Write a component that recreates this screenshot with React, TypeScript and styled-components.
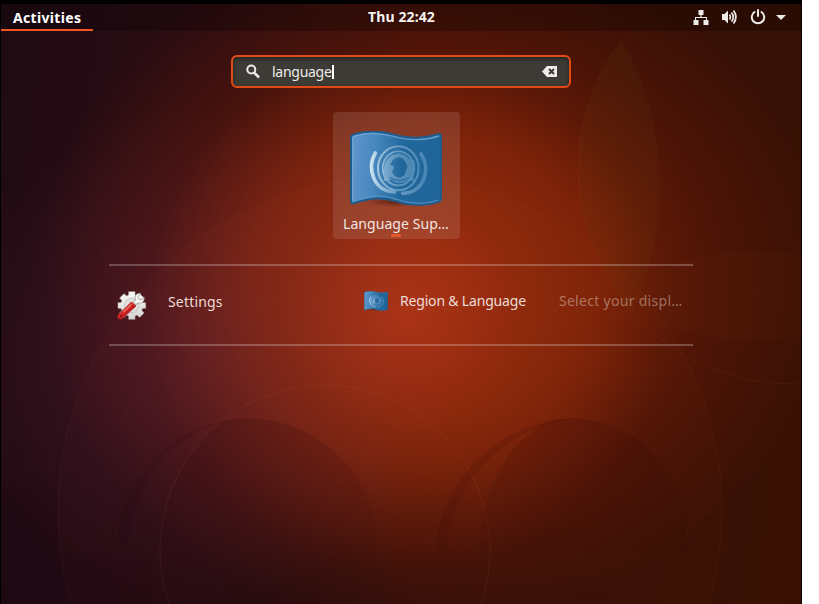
import React from "react";
import styled, { createGlobalStyle } from "styled-components";

const GlobalStyle = createGlobalStyle`
  html, body { margin: 0; padding: 0; background: #fff; }
  body { overflow: hidden; font-family: "Noto Sans", "Open Sans", sans-serif; }
  * { box-sizing: border-box; }
`;

const Screen = styled.div`
  width: 802px;
  height: 604px;
  padding: 4px 1px 0;
  background: #000;
`;

const Desktop = styled.main`
  position: relative;
  isolation: isolate;
  display: flex;
  flex-direction: column;
  align-items: center;
  height: 600px;
  overflow: hidden;
  background:
    radial-gradient(circle 260px at 405px 310px, rgba(192, 60, 28, 0.68), rgba(172, 54, 20, 0.38) 45%, rgba(150, 45, 14, 0)),
    radial-gradient(ellipse 260px 250px at 205px 350px, rgba(92, 34, 64, 0.46), rgba(92, 34, 64, 0)),
    radial-gradient(ellipse 395px 350px at 430px 275px, rgba(146, 42, 12, 0.85), rgba(138, 36, 8, 0.74) 40%, rgba(112, 28, 8, 0.4) 70%, rgba(80, 18, 6, 0)),
    radial-gradient(ellipse 480px 260px at 150px 640px, rgba(22, 8, 18, 0.5), rgba(22, 8, 18, 0)),
    linear-gradient(97deg, #200b14 0%, #2a0c12 22%, #320e09 50%, #371105 100%);
`;

const Wallpaper = styled.svg`
  position: absolute;
  inset: 0;
  z-index: -1;
`;

const TopBar = styled.header`
  display: grid;
  grid-template-columns: 1fr auto 1fr;
  align-items: stretch;
  width: 100%;
  height: 27px;
  background: rgba(0, 0, 0, 0.25);
  color: #f5f2f0;
  font-size: 14px;
  font-weight: 700;
  line-height: 20px;
`;

const Activities = styled.div`
  width: 92px;
  height: 27px;
  padding: 4px 0 0 12px;
  border-bottom: 2px solid #ef5526;
  color: #fff;
  letter-spacing: 0.33px;
  white-space: nowrap;
`;

const Clock = styled.time`
  padding: 3px 0 0 1px;
  letter-spacing: 0.1px;
  white-space: nowrap;
`;

const StatusArea = styled.div`
  display: flex;
  justify-content: flex-end;
  align-items: flex-start;
  padding: 5px 15px 0 0;
`;

const SearchEntry = styled.div`
  display: flex;
  align-items: center;
  width: 340px;
  height: 33px;
  margin-top: 24px;
  padding: 0 12px 0 13px;
  border: 2px solid #e24a15;
  border-radius: 6px;
  background: #3d3b36;
  box-shadow: inset 0 2px 4px rgba(0, 0, 0, 0.4);
  color: #eeebe8;
`;

const Query = styled.span`
  margin-left: 12px;
  font-size: 14px;
  line-height: 18px;
  letter-spacing: -0.27px;
  white-space: nowrap;
`;

const Caret = styled.span`
  height: 14px;
  flex: 1;
  border-left: 2px solid #fff;
`;

const AppTile = styled.div`
  display: flex;
  flex-direction: column;
  align-items: center;
  width: 127px;
  height: 127px;
  margin: 24px 9px 0 0;
  padding: 19px 2px 0 0;
  border-radius: 4px;
  background: rgba(255, 255, 255, 0.11);
`;

const TileLabel = styled.span`
  margin: 7px 0 0 1px;
  color: #f0e6e2;
  font-size: 14px;
  line-height: 20px;
  letter-spacing: 0.06px;
  white-space: nowrap;
`;

const RunningMark = styled.i`
  width: 10px;
  height: 3px;
  flex: none;
  background: #e2582a;
`;

const Results = styled.section`
  display: flex;
  align-items: flex-start;
  width: 584px;
  height: 82px;
  margin-top: 25px;
  border-top: 2px solid rgba(255, 255, 255, 0.24);
  border-bottom: 2px solid rgba(255, 255, 255, 0.24);
`;

const Provider = styled.div`
  display: flex;
  align-items: flex-start;
  width: 255px;
  padding: 24px 0 0 7px;
`;

const Match = styled.div`
  display: flex;
  align-items: flex-start;
  padding-top: 25px;
`;

const ResultText = styled.span<{ $faded?: boolean; $gap: number; $top: number; $spacing: number }>`
  margin: ${({ $top, $gap }) => `${$top}px 0 0 ${$gap}px`};
  color: ${({ $faded }) => ($faded ? "rgba(238, 224, 216, 0.43)" : "#ebdcd6")};
  font-size: 14px;
  line-height: 20px;
  letter-spacing: ${({ $spacing }) => $spacing}px;
  white-space: nowrap;
`;

const WallpaperArt = () => (
  <Wallpaper width="800" height="600" viewBox="1 4 800 600" fill="none" aria-hidden="true">
    <defs>
      <clipPath id="left-dome"><circle cx="247" cy="549" r="131" /></clipPath>
      <linearGradient id="dome-fade" x1="0" y1="418" x2="0" y2="600" gradientUnits="userSpaceOnUse">
        <stop stopColor="#2a0206" stopOpacity=".17" />
        <stop offset="1" stopColor="#2a0206" stopOpacity="0" />
      </linearGradient>
    </defs>
    <g stroke="#d9842e" strokeOpacity=".07">
      <circle cx="390" cy="510" r="332" />
      <circle cx="325" cy="550" r="165" strokeOpacity=".1" />
      <circle cx="792" cy="170" r="214" />
      <circle cx="708" cy="534" r="21" strokeOpacity=".04" />
      <circle cx="700" cy="560" r="28" strokeOpacity=".04" />
      <circle cx="20" cy="345" r="127" strokeOpacity=".03" />
      <circle cx="247" cy="549" r="131" strokeOpacity=".03" />
    </g>
    <path d="M622 40A214 214 0 0 0 632 312A300 300 0 0 0 622 40Z" fill="#6b4a10" fillOpacity=".1" />
    <ellipse cx="755" cy="296" rx="118" ry="44" fill="#7a3a10" fillOpacity=".07" />
    <circle cx="390" cy="510" r="332" fill="#c05018" fillOpacity=".025" />
    <g clipPath="url(#left-dome)">
      <circle cx="325" cy="550" r="165" fill="url(#dome-fade)" />
    </g>
    <path d="M480 550C482 490 505 445 545 423Q562 417 580 419C640 423 680 470 697 550Z" fill="url(#dome-fade)" />
    <path d="M116 550a131 131 0 0 1 120-131c-60 10-104 60-109 131Z" fill="#180408" fillOpacity=".09" />
    <path d="M435 550a145 145 0 0 1 145-132c-70 6-128 60-134 132Z" fill="#300404" fillOpacity=".14" />
    <path d="M390 4h411v600H390Z" fill="#a23c00" fillOpacity=".025" />
    <path d="M1 485h57v67h95v52H1Z" fill="#100812" fillOpacity=".04" />
  </Wallpaper>
);

const Flag = ({ id, width, height }: { id: string; width: number; height: number }) => (
  <svg width={width} height={height} viewBox="0 0 276 228" preserveAspectRatio="none" fill="none" aria-hidden="true">
    <defs>
      <linearGradient id={`${id}-cloth`} x1="0" y1="50" x2="276" y2="70" gradientUnits="userSpaceOnUse">
        <stop stopColor="#6296ce" /><stop offset=".28" stopColor="#4687bd" />
        <stop offset=".58" stopColor="#20679b" /><stop offset="1" stopColor="#20659a" />
      </linearGradient>
      <linearGradient id={`${id}-emblem`} x1="60" y1="110" x2="230" y2="110" gradientUnits="userSpaceOnUse">
        <stop stopColor="#d3e5f1" /><stop offset=".2" stopColor="#94bcda" />
        <stop offset=".5" stopColor="#6599c0" /><stop offset="1" stopColor="#4886b4" />
      </linearGradient>
      <radialGradient id={`${id}-shadow`}>
        <stop stopColor="#2d0b04" stopOpacity=".55" /><stop offset="1" stopColor="#2d0b04" stopOpacity="0" />
      </radialGradient>
    </defs>
    <ellipse cx="138" cy="212" rx="88" ry="16" fill={`url(#${id}-shadow)`} />
    <path d="M3 20Q3 13 10 11C62-5 99 2 145 14C187 25 226 21 264 10Q273 7 273 15V204Q273 210 267 212C231 225 182 225 139 211C93 195 55 203 12 216Q3 219 3 211Z" fill={`url(#${id}-cloth)`} stroke="#1f5c8d" strokeWidth="6" />
    <path d="M8 207V22Q8 17 14 15C60 2 97 7 143 19C190 31 230 27 267 15" stroke="#79abd6" strokeOpacity=".75" strokeWidth="4" />
    <path d="M8 210C60 193 94 190 143 206C187 221 233 219 265 207" stroke="#5f9aca" strokeOpacity=".7" strokeWidth="4" />
    <g stroke={`url(#${id}-emblem)`} strokeLinecap="round">
      <path d="M76 66C50 112 70 180 134 183M213 69C245 116 220 186 158 187" strokeWidth="11" />
      <ellipse cx="145" cy="112" rx="61" ry="66" strokeWidth="6" />
      <ellipse cx="145" cy="112" rx="47" ry="51" strokeWidth="5" />
    </g>
    <path fillRule="evenodd" d="M113 83 127 72 146 67 165 72 178 84 194 90 196 116 188 129 192 150 175 147 160 155 139 155 124 146 100 150 106 134 99 119 104 99ZM128 88 120 102 131 105 131 117 124 119 134 135 150 140 164 132 168 118 173 106 167 94 158 82 146 79 134 83Z" fill={`url(#${id}-emblem)`} fillOpacity=".8" />
    <path d="M119 139Q145 159 178 139" stroke="#2d73a9" strokeWidth="4" />
  </svg>
);

const NetworkIcon = () => (
  <svg width="16" height="16" viewBox="0 0 16 16" fill="#efebe8" aria-hidden="true">
    <path d="M5.500 1h5v5H8.600v2H14v3h1.500v5h-5v-5H13V9H3v2h2.500v5h-5v-5H2V8h5.400V6H5.500Z" />
  </svg>
);

const VolumeIcon = styled.svg`margin-left: 12px;`;
const PowerIcon = styled.svg`margin-left: 13px;`;
const MenuArrow = styled.svg`margin: 6px 0 0 10px;`;

const SettingsIcon = () => (
  <svg width="31" height="31" viewBox="0 0 93 93" aria-hidden="true">
    <defs>
      <linearGradient id="gear" x2="0" y2="1"><stop stopColor="#fafaf9" /><stop offset="1" stopColor="#d4d5d3" /></linearGradient>
      <linearGradient id="handle" x2="1" y2="1"><stop stopColor="#f06a61" /><stop offset=".5" stopColor="#cf2020" /><stop offset="1" stopColor="#8c1218" /></linearGradient>
    </defs>
    <path d="M38 5h19v10l6 3 8-7 13 13-7 8 3 6h9v17h-9l-3 6 7 8-13 13-8-7-6 3v10H38V78l-6-3-8 7-13-13 7-8-3-6H6V38h9l3-6-7-8 13-13 8 7 6-3Z" fill="url(#gear)" stroke="#b9b7b5" strokeWidth="1.500" />
    <circle cx="47" cy="46" r="22" fill="#dfe0de" stroke="#bdbdbb" strokeWidth="2" />
    <path d="m52 35 8-5c-8-11 2-23 15-19l-9 9 3 8 9 1 6-9c4 14-8 22-20 19L60 45Z" fill="#f6f6f4" stroke="#8c8b88" strokeWidth="2" />
    <path d="M46 36 7 74c-6 8 4 18 13 11L60 48Z" fill="url(#handle)" stroke="#a81c1d" strokeWidth="2" />
    <path d="M47 43 22 67" stroke="#ec7468" strokeWidth="4" /><circle cx="15" cy="78" r="3" fill="#6d1115" />
  </svg>
);

export default function App() {
  return (
    <>
      <GlobalStyle />
      <Screen>
        <Desktop>
          <WallpaperArt />
          <TopBar>
            <Activities>Activities</Activities>
            <Clock>Thu 22:42</Clock>
            <StatusArea>
              <NetworkIcon />
              <VolumeIcon width="16" height="16" viewBox="0 0 16 16" fill="none" stroke="#efebe8" strokeWidth="1.700" aria-hidden="true">
                <path d="M1 5h2.500L7 1.500v13L3.500 11H1Z" fill="#efebe8" stroke="none" />
                <path d="M8.500 5.500q1.800 2.500 0 5M10.500 3.500q3.600 4.500 0 9M12.500 1.500q4.800 6.500 0 13" />
              </VolumeIcon>
              <PowerIcon width="16" height="16" viewBox="0 0 16 16" fill="none" stroke="#efebe8" strokeWidth="2" strokeLinecap="round" aria-hidden="true">
                <path d="M4.500 3a6.200 6.200 0 1 0 7 0M8 1v6" />
              </PowerIcon>
              <MenuArrow width="10" height="6" viewBox="0 0 10 6" fill="#efebe8" aria-hidden="true"><path d="M0 0h10L5 5Z" /></MenuArrow>
            </StatusArea>
          </TopBar>

          <SearchEntry>
            <svg width="14" height="15" viewBox="0 0 14 15" fill="none" stroke="#eeebe8" strokeWidth="2" aria-hidden="true">
              <circle cx="5.300" cy="5.500" r="4" /><path d="m8 8.500 5 5" strokeWidth="2.500" />
            </svg>
            <Query>language</Query><Caret />
            <svg width="15" height="12" viewBox="0 0 15 12" aria-hidden="true">
              <path d="M5 0h10v11H5L0 5.500Z" fill="#eeebe8" /><path d="m7 3 5 5m0-5L7 8" stroke="#3d3b36" strokeWidth="2" />
            </svg>
          </SearchEntry>

          <AppTile>
            <Flag id="support" width={92} height={76} />
            <TileLabel>Language Sup…</TileLabel>
            <RunningMark />
          </AppTile>

          <Results>
            <Provider>
              <SettingsIcon />
              <ResultText $gap={21} $top={2} $spacing={0.18}>Settings</ResultText>
            </Provider>
            <Match>
              <Flag id="region" width={24} height={20} />
              <ResultText $gap={12} $top={0} $spacing={-0.18}>Region &amp; Language</ResultText>
              <ResultText $faded $gap={33} $top={0} $spacing={0.3}>Select your displ…</ResultText>
            </Match>
          </Results>
        </Desktop>
      </Screen>
    </>
  );
}
